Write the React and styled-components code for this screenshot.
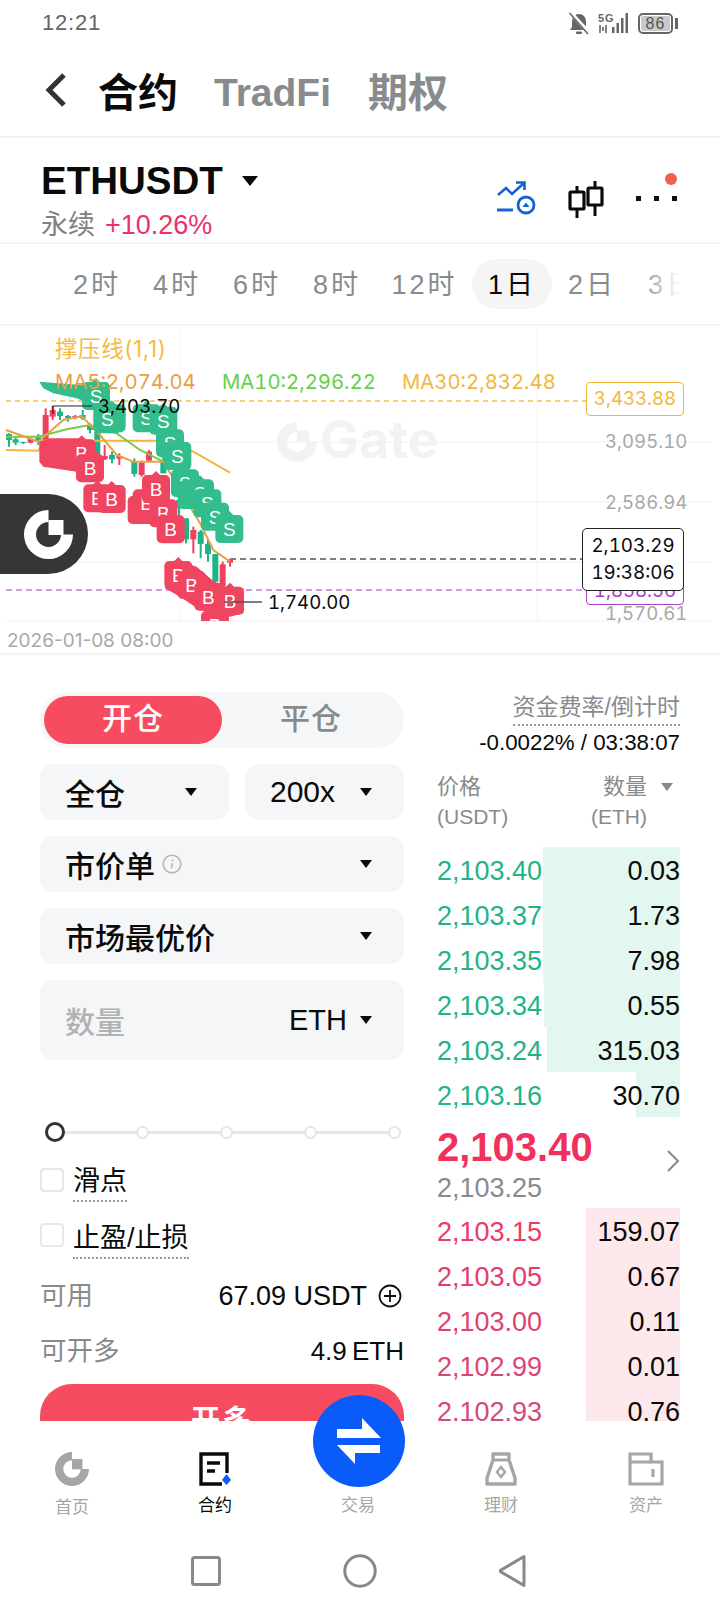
import styled, { createGlobalStyle } from "styled-components";

const red = "#f74b60";
const green = "#1fb488";
const FONT = `"Liberation Sans", "Noto Sans CJK SC", sans-serif`;
const CHART_FONT = `Inter, "Noto Sans CJK SC", sans-serif`;

const GlobalStyle = createGlobalStyle`
  html, body { margin: 0; padding: 0; background: #fff; }
  body { font-family: ${FONT}; color: #0a0a0a; }
  * { box-sizing: border-box; }
`;

const Page = styled.div`
  width: 720px;
  height: 1612px;
  overflow: hidden;
  display: flex;
  flex-direction: column;
  background: #fff;
`;

/* status bar */
const StatusBar = styled.div`
  height: 50px;
  padding: 0 47px 4px 42px;
  display: flex;
  align-items: center;
  justify-content: space-between;
  color: #666;
  font-size: 22px;
  letter-spacing: 0.8px;
`;
const StatusIcons = styled.div`
  display: flex;
  align-items: center;
  gap: 8px;
`;
const Battery = styled.div`
  width: 35px;
  height: 21px;
  border: 2px solid #666;
  border-radius: 5px;
  padding: 1px;
  display: flex;
  position: relative;
  &::after {
    content: "";
    position: absolute;
    right: -7px;
    top: 3px;
    width: 3px;
    height: 11px;
    background: #666;
  }
`;
const BatteryFill = styled.div`
  flex: 1;
  background: #c9c9c9;
  border-radius: 2px;
  font-size: 16px;
  line-height: 15px;
  letter-spacing: 1px;
  text-align: center;
  color: #555;
`;

/* header tabs */
const Header = styled.div`
  height: 88px;
  padding: 0 0 6px 44px;
  display: flex;
  align-items: center;
  border-bottom: 2px solid #f2f2f2;
`;
const HeaderTab = styled.div`
  font-size: ${(p) => p.$size || 40}px;
  font-weight: 700;
  color: ${(p) => (p.$active ? "#0a0a0a" : "#888b8d")};
  margin-left: ${(p) => p.$gap}px;
  padding-top: ${(p) => p.$drop || 0}px;
`;

/* symbol row */
const SymbolBar = styled.div`
  height: 106px;
  padding: 20px 42px 0 41px;
  display: flex;
  justify-content: space-between;
  border-bottom: 2px solid #f4f4f4;
`;
const SymbolName = styled.div`
  display: flex;
  align-items: center;
  gap: 19px;
  font-size: 38.5px;
  line-height: 46px;
  font-weight: 700;
`;
const Caret = styled.span`
  display: inline-block;
  width: 0;
  height: 0;
  border-left: ${(p) => p.$size || 6}px solid transparent;
  border-right: ${(p) => p.$size || 6}px solid transparent;
  border-top: ${(p) => (p.$size || 6) + 2}px solid ${(p) => p.$color || "#0a0a0a"};
`;
const SymbolSub = styled.div`
  display: flex;
  align-items: baseline;
  gap: 10px;
  margin-top: 3px;
  color: #808080;
  font-size: 27px;
  line-height: 36px;
`;
const Change = styled.span`
  color: #e8336a;
`;
const Tools = styled.div`
  display: flex;
  align-items: flex-start;
  gap: 32px;
  padding-top: 23px;
`;

/* interval tabs */
const Intervals = styled.div`
  height: 80px;
  padding-left: 57px;
  margin-right: 40px;
  display: flex;
  align-items: center;
  overflow: hidden;
  position: relative;
  &::after {
    content: "";
    position: absolute;
    right: 0;
    top: 0;
    width: 40px;
    height: 100%;
    background: linear-gradient(90deg, rgba(255, 255, 255, 0), #fff);
  }
`;
const Interval = styled.div`
  flex: none;
  width: ${(p) => p.$w || 80}px;
  height: 50px;
  line-height: 53px;
  text-align: center;
  font-size: 27px;
  letter-spacing: 3px;
  border-radius: 25px;
  color: ${(p) => (p.$active ? "#0a0a0a" : "#888b8d")};
  background: ${(p) => (p.$active ? "#f5f5f5" : "transparent")};
`;
const Rule = styled.div`
  height: 2px;
  background: #f4f4f4;
`;

/* chart */
const Chart = styled.div`
  position: relative;
  height: 329px;
  border-bottom: 2px solid #f4f4f4;
  font-family: ${CHART_FONT};
  font-variant-numeric: tabular-nums;
`;
const ChartSvg = styled.svg`
  position: absolute;
  inset: 0;
  display: block;
`;
const ChartLabel = styled.div`
  position: absolute;
  left: ${(p) => p.$x}px;
  top: ${(p) => p.$y}px;
  transform: translateY(-50%);
  font-size: ${(p) => p.$size || 18.6}px;
  font-variant-numeric: ${(p) => (p.$plain ? "normal" : "tabular-nums")};
  letter-spacing: ${(p) => p.$track || 0}px;
  color: ${(p) => p.$color || "#0a0a0a"};
  white-space: nowrap;
`;
const PriceTag = styled.div`
  position: absolute;
  left: 586px;
  top: ${(p) => p.$y}px;
  width: 98px;
  height: ${(p) => p.$h}px;
  border: 1.5px solid ${(p) => p.$color};
  border-radius: 4px;
  background: #fff;
  color: ${(p) => p.$color};
  font-size: 18.6px;
  line-height: ${(p) => p.$h - 3}px;
  text-align: center;
`;
const LiveTag = styled.div`
  position: absolute;
  left: 582px;
  top: 202px;
  width: 102px;
  height: 63px;
  border: 1.5px solid #222;
  border-radius: 5px;
  background: #fff;
  color: #0a0a0a;
  font-size: 18.8px;
  line-height: 27px;
  padding-top: 3px;
  text-align: center;
`;
const Floating = styled.div`
  position: absolute;
  left: 0;
  top: 168px;
  width: 88px;
  height: 80px;
  background: #363636;
  border-radius: 0 40px 40px 0;
  display: flex;
  align-items: center;
  padding-left: 24px;
`;

/* trade area */
const Trade = styled.div`
  height: 766px;
  overflow: hidden;
  padding: 37px 40px 0;
  display: grid;
  grid-template-columns: 364px 243px;
  column-gap: 33px;
  align-items: start;
`;
const Form = styled.div`
  display: flex;
  flex-direction: column;
  gap: 16px;
`;
const Toggle = styled.div`
  height: 56px;
  padding: 4px;
  border-radius: 28px;
  background: #f5f6f7;
  display: flex;
`;
const ToggleItem = styled.div`
  width: 178px;
  border-radius: 24px;
  text-align: center;
  font-size: 30px;
  font-weight: 500;
  line-height: 46px;
  letter-spacing: 1px;
  color: ${(p) => (p.$active ? "#fff" : "#888b8d")};
  background: ${(p) => (p.$active ? red : "transparent")};
`;
const SelectRow = styled.div`
  display: flex;
  gap: 16px;
`;
const Select = styled.div`
  flex: none;
  width: ${(p) => (p.$w ? `${p.$w}px` : "100%")};
  height: ${(p) => p.$h || 56}px;
  padding: 0 32px 0 25px;
  border-radius: 14px;
  background: #f5f6f7;
  display: flex;
  align-items: center;
  justify-content: space-between;
  font-size: 30px;
  font-weight: 500;
`;
const SelectText = styled.div`
  display: flex;
  align-items: center;
  gap: 7px;
  color: ${(p) => p.$color || "#0a0a0a"};
`;
const Unit = styled.div`
  display: flex;
  align-items: center;
  gap: 13px;
  font-size: 29px;
`;

const Slider = styled.div`
  margin: 46px 3px 0 5px;
  height: 20px;
  display: flex;
  align-items: center;
  justify-content: space-between;
  position: relative;
  &::before {
    content: "";
    position: absolute;
    left: 0;
    right: 0;
    top: 9px;
    height: 2.5px;
    background: #e4e6e7;
  }
`;
const Knob = styled.div`
  position: relative;
  width: ${(p) => (p.$on ? 20 : 13)}px;
  height: ${(p) => (p.$on ? 20 : 13)}px;
  border-radius: 50%;
  background: #fff;
  border: ${(p) => (p.$on ? "3.5px solid #333" : "2px solid #e4e6e7")};
`;
const CheckRow = styled.div`
  display: flex;
  align-items: flex-start;
  gap: 9px;
  margin-top: ${(p) => p.$mt}px;
`;
const Box = styled.div`
  width: 24px;
  height: 24px;
  margin-top: ${(p) => p.$mt}px;
  border: 2px solid #e6e8e9;
  border-radius: 4px;
`;
const Dotted = styled.div`
  font-size: ${(p) => p.$size || 27}px;
  line-height: ${(p) => p.$lh || 34}px;
  color: ${(p) => p.$color || "#0a0a0a"};
  padding-bottom: 2px;
  border-bottom: 2px dotted #9a9a9a;
`;
const InfoRow = styled.div`
  display: flex;
  align-items: center;
  justify-content: space-between;
  height: 36px;
  margin-top: ${(p) => p.$mt}px;
  font-size: 27px;
  color: #0a0a0a;
`;
const InfoLabel = styled.div`
  color: #888b8d;
  font-size: 26.5px;
  padding-bottom: 6px;
`;
const InfoValue = styled.div`
  display: flex;
  align-items: center;
  gap: 11px;
  padding-right: 2px;
`;
const MaxValue = styled.div`
  font-size: 26px;
  word-spacing: -2px;
`;
const OpenButton = styled.div`
  margin-top: -1px;
  height: 74px;
  flex: none;
  border-radius: 32px;
  background: ${red};
  color: #fff;
  font-size: 29px;
  font-weight: 700;
  line-height: 74px;
  text-align: center;
  letter-spacing: 2px;
`;

/* order book */
const Book = styled.div`
  display: flex;
  flex-direction: column;
`;
const Funding = styled.div`
  display: flex;
  flex-direction: column;
  align-items: flex-end;
`;
const FundingValue = styled.div`
  font-size: 22.3px;
  line-height: 30px;
  margin-top: 2px;
`;
const BookHead = styled.div`
  display: flex;
  justify-content: space-between;
  margin-top: 13px;
  color: #888b8d;
`;
const HeadCell = styled.div`
  display: flex;
  flex-direction: column;
  align-items: ${(p) => (p.$right ? "flex-end" : "flex-start")};
  padding-right: ${(p) => (p.$right ? 33 : 0)}px;
  font-size: 22px;
  line-height: 32px;
  position: relative;
`;
const HeadUnit = styled.div`
  font-size: 21px;
  line-height: 28px;
`;
const HeadCaret = styled.div`
  position: absolute;
  right: 7px;
  top: -3px;
`;
const Levels = styled.div`
  margin-top: ${(p) => p.$mt}px;
`;
const Level = styled.div`
  position: relative;
  height: 45px;
  padding-top: 3px;
  display: flex;
  align-items: center;
  justify-content: space-between;
  font-size: 27px;
  color: #0a0a0a;
`;
const DepthBar = styled.div`
  position: absolute;
  right: 0;
  top: 0;
  bottom: 0;
  background: ${(p) => p.$bg};
`;
const LevelText = styled.span`
  position: relative;
  color: ${(p) => p.$color || "inherit"};
`;
const Mid = styled.div`
  height: 91px;
  position: relative;
  padding-top: 7px;
`;
const MidPrice = styled.div`
  font-size: 40px;
  font-weight: 700;
  line-height: 46px;
  color: #f2305c;
`;
const MidMark = styled.div`
  font-size: 27px;
  line-height: 32px;
  margin-top: 2px;
  color: #888b8d;
`;
const MidArrow = styled.svg`
  position: absolute;
  right: 0;
  top: 32px;
`;

/* bottom nav */
const BottomNav = styled.div`
  position: relative;
  height: 108px;
  display: grid;
  grid-template-columns: 144px 142px 144px 142px 148px;
  padding-top: 30px;
  background: #fff;
`;
const NavItem = styled.div`
  display: flex;
  flex-direction: column;
  align-items: center;
  gap: ${(p) => p.$gap || 7}px;
  font-size: 17px;
  line-height: 24px;
  color: ${(p) => (p.$active ? "#0a0a0a" : "#a6a6a6")};
`;
const NavIcon = styled.div`
  height: 36px;
  display: flex;
  align-items: center;
`;
const Fab = styled.div`
  position: absolute;
  left: 313px;
  top: -26px;
  width: 92px;
  height: 92px;
  border-radius: 50%;
  background: #0a5cfa;
  display: flex;
  align-items: center;
  justify-content: center;
`;
const SystemBar = styled.div`
  flex: 1;
  display: flex;
  align-items: center;
  justify-content: center;
  gap: 122px;
`;

const GateMark = ({ size, color }) => (
  <svg width={size} height={size} viewBox="0 0 49 49">
    <path
      d="M24.5 0A24.5 24.5 0 1 0 49 24.5H37A12.5 12.5 0 1 1 24.5 12Z"
      fill={color}
    />
    <rect x="24.5" y="10" width="15" height="15" fill={color} />
  </svg>
);

// candle data and markers are in 3x crop units, converted by toPx / toY
const candles = [
  [27, 310, 350, 312, 330, 0], [47, 320, 345, 328, 338, 0], [70, 335, 342, 336, 339, 0],
  [92, 325, 340, 326, 338, 1], [115, 312, 345, 322, 335, 0], [137, 235, 330, 255, 330, 1],
  [158, 228, 270, 240, 260, 1], [180, 235, 270, 245, 258, 0], [204, 255, 275, 258, 265, 0],
  [226, 255, 268, 258, 264, 1], [248, 240, 270, 255, 265, 0], [270, 280, 310, 285, 300, 0],
  [292, 300, 375, 305, 372, 0], [314, 345, 390, 378, 388, 1], [336, 365, 400, 375, 388, 0],
  [358, 370, 405, 378, 386, 1], [403, 385, 440, 395, 432, 0], [425, 392, 440, 398, 435, 1],
  [447, 360, 395, 365, 392, 1], [490, 380, 430, 395, 430, 0], [537, 505, 560, 510, 535, 0],
  [558, 565, 640, 565, 628, 0], [580, 590, 670, 600, 628, 1], [602, 600, 685, 605, 642, 0],
  [624, 630, 695, 642, 672, 0], [646, 672, 760, 672, 755, 0], [668, 695, 770, 703, 770, 1],
  [690, 688, 710, 688, 698, 1],
];

const sellBlob = [[118, 155], [330, 172], [330, 232], [290, 228], [230, 205], [160, 190], [130, 175]];
const buyBlobs = [
  [[118, 335], [150, 325], [250, 325], [300, 375], [300, 420], [230, 425], [130, 410], [118, 395]],
  [[495, 705], [530, 690], [590, 710], [660, 770], [730, 775], [730, 850], [690, 860], [600, 840], [540, 800], [495, 775]],
];

const sells = [
  [288, 198], [335, 265], [322, 268], [440, 265], [490, 272], [510, 340], [532, 378],
  [555, 460], [575, 495], [600, 490], [622, 520], [645, 560], [688, 597],
];
const buys = [
  [245, 370], [270, 415], [292, 505], [335, 507], [425, 540], [440, 520], [468, 477],
  [490, 550], [512, 598], [535, 735], [575, 765], [625, 800], [690, 812], [645, 885],
];

const toPx = (v) => v / 3;
const toY = (v) => v / 3 + 330 - 326;
const blobPoints = (pts) => pts.map(([x, y]) => `${toPx(x)},${toY(y)}`).join(" ");

const Marker = ({ cx, cy, fill, label }) => {
  const x = toPx(cx);
  const y = toY(cy);
  const s = 28;
  return (
    <g>
      <rect x={x - s / 2} y={y - s / 2} width={s} height={s} rx="5" fill={fill} />
      <path
        d={`M${x - 5} ${y - s / 2 + 1}L${x} ${y - s / 2 - 4}L${x + 5} ${y - s / 2 + 1}Z`}
        fill={fill}
      />
      <text x={x} y={y + 7} textAnchor="middle" fontSize="19" fontFamily="Liberation Sans, sans-serif" fill="#fff">
        {label}
      </text>
    </g>
  );
};

const PriceChart = () => (
  <Chart>
    <ChartSvg width="720" height="329" viewBox="0 0 720 329">
      <defs>
        <clipPath id="plot">
          <rect x="0" y="0" width="720" height="295" />
        </clipPath>
      </defs>
      {[116, 176, 236, 295].map((y) => (
        <line key={y} x1="6" x2="712" y1={y} y2={y} stroke="#f6f6f6" strokeWidth="1.5" />
      ))}
      <line x1="180" x2="180" y1="0" y2="295" stroke="#f9f9f9" strokeWidth="1.5" />
      <line x1="537" x2="537" y1="0" y2="295" stroke="#f8f8f8" strokeWidth="1.5" />

      <g fill="#f1f3f3">
        <path d="M297 96A20 20 0 1 0 317 116H307A10 10 0 1 1 297 106Z" />
        <rect x="297" y="104" width="12" height="12" />
        <text x="320" y="132" fontSize="52" fontWeight="700" fontFamily="Inter, sans-serif">Gate</text>
      </g>

      <line x1="6" x2="586" y1="75" y2="75" stroke="#f2c14e" strokeWidth="1.5" strokeDasharray="5 4" />
      <line x1="230" x2="582" y1="233" y2="233" stroke="#555" strokeWidth="1.5" strokeDasharray="6 4" />
      <line x1="6" x2="586" y1="264" y2="264" stroke="#c77ddb" strokeWidth="1.5" strokeDasharray="6 4" />

      {candles.map(([x, hi, lo, top, bot, up]) => (
        <g key={x} fill={up ? "#f0405f" : "#1fb488"}>
          <rect x={toPx(x) - 1} y={toY(hi)} width="2" height={toPx(lo - hi)} />
          <rect x={toPx(x) - 3} y={toY(top)} width="6" height={toPx(bot - top)} />
        </g>
      ))}

      <polyline
        fill="none"
        stroke="#f4b43f"
        strokeWidth="2"
        points={blobPoints([[18, 360], [115, 362], [130, 332], [470, 332], [580, 365], [690, 428]])}
      />
      <polyline
        fill="none"
        stroke="#7ac943"
        strokeWidth="2"
        points={blobPoints([[18, 320], [115, 320], [200, 298], [270, 285], [350, 310], [420, 360], [490, 395]])}
      />
      <polyline
        fill="none"
        stroke="#e8a045"
        strokeWidth="2"
        points={blobPoints([[18, 300], [60, 315], [115, 335], [190, 270], [245, 258], [300, 315], [350, 375], [400, 395], [490, 395], [600, 580], [640, 660], [690, 695]])}
      />

      <g clipPath="url(#plot)">
        <polygon points={blobPoints(sellBlob)} fill="#33bd8d" />
        {sells.map(([x, y]) => (
          <Marker key={`s${x}${y}`} cx={x} cy={y} fill="#33bd8d" label="S" />
        ))}
        {buyBlobs.map((pts, i) => (
          <polygon key={i} points={blobPoints(pts)} fill="#ef4560" />
        ))}
        {buys.map(([x, y]) => (
          <Marker key={`b${x}${y}`} cx={x} cy={y} fill="#ef4560" label="B" />
        ))}
      </g>

      <path d="M53 88V80H92" stroke="#222" strokeWidth="1.2" fill="none" />
      <path d="M224 276H262" stroke="#555" strokeWidth="1.5" fill="none" />
    </ChartSvg>

    <ChartLabel $x={55} $y={21} $size={22.5} $track={0.6} $plain $color="#f5bb45">撑压线(1,1)</ChartLabel>
    <ChartLabel $x={55} $y={55} $size={20.3} $color="#e8a045">MA5:2,074.04</ChartLabel>
    <ChartLabel $x={222} $y={55} $size={20.3} $color="#66cf4a">MA10:2,296.22</ChartLabel>
    <ChartLabel $x={402} $y={55} $size={20.3} $color="#f2b73c">MA30:2,832.48</ChartLabel>
    <ChartLabel $x={98} $y={80}>3,403.70</ChartLabel>
    <ChartLabel $x={268} $y={276}>1,740.00</ChartLabel>
    <ChartLabel $x={605} $y={115} $color="#a8a8a8">3,095.10</ChartLabel>
    <ChartLabel $x={605} $y={176} $color="#a8a8a8">2,586.94</ChartLabel>
    <ChartLabel $x={605} $y={287} $color="#a8a8a8">1,570.61</ChartLabel>
    <ChartLabel $x={7} $y={314} $size={19} $plain $color="#a8a8a8">2026-01-08 08:00</ChartLabel>

    <PriceTag $y={56} $h={34} $color="#f2b73c">3,433.88</PriceTag>
    <PriceTag $y={250} $h={29} $color="#a742c8">1,858.56</PriceTag>
    <LiveTag>
      2,103.29
      <br />
      19:38:06
    </LiveTag>

    <Floating>
      <GateMark size={49} color="#fff" />
    </Floating>
  </Chart>
);

const asks = [
  ["2,103.40", "0.03", 137],
  ["2,103.37", "1.73", 137],
  ["2,103.35", "7.98", 137],
  ["2,103.34", "0.55", 136],
  ["2,103.24", "315.03", 133],
  ["2,103.16", "30.70", 44],
];
const bids = [
  ["2,103.15", "159.07", 94, "#ee3a66"],
  ["2,103.05", "0.67", 94, "#e53d6b"],
  ["2,103.00", "0.11", 94, "#e0436f"],
  ["2,102.99", "0.01", 94, "#db4673"],
  ["2,102.93", "0.76", 94, "#d54a78"],
];

const OrderBook = () => (
  <Book>
    <Funding>
      <Dotted $size={23} $lh={30} $color="#888b8d">资金费率/倒计时</Dotted>
      <FundingValue>-0.0022% / 03:38:07</FundingValue>
    </Funding>
    <BookHead>
      <HeadCell>
        价格
        <HeadUnit>(USDT)</HeadUnit>
      </HeadCell>
      <HeadCell $right>
        数量
        <HeadUnit>(ETH)</HeadUnit>
        <HeadCaret>
          <Caret $color="#888b8d" />
        </HeadCaret>
      </HeadCell>
    </BookHead>
    <Levels $mt={16}>
      {asks.map(([price, size, depth]) => (
        <Level key={price}>
          <DepthBar $bg="#e3f7f1" style={{ width: depth }} />
          <LevelText $color={green}>{price}</LevelText>
          <LevelText>{size}</LevelText>
        </Level>
      ))}
    </Levels>
    <Mid>
      <MidPrice>2,103.40</MidPrice>
      <MidMark>2,103.25</MidMark>
      <MidArrow width="14" height="24" viewBox="0 0 14 24">
        <path d="M2 2L12 12L2 22" fill="none" stroke="#888" strokeWidth="2" />
      </MidArrow>
    </Mid>
    <Levels $mt={0}>
      {bids.map(([price, size, depth, color]) => (
        <Level key={price}>
          <DepthBar $bg="#fde8ec" style={{ width: depth }} />
          <LevelText $color={color}>{price}</LevelText>
          <LevelText>{size}</LevelText>
        </Level>
      ))}
    </Levels>
  </Book>
);

const OrderForm = () => (
  <Form>
    <Toggle>
      <ToggleItem $active>开仓</ToggleItem>
      <ToggleItem>平仓</ToggleItem>
    </Toggle>
    <SelectRow>
      <Select $w={189}>
        <SelectText>全仓</SelectText>
        <Caret />
      </Select>
      <Select $w={159}>
        <SelectText>200x</SelectText>
        <Caret />
      </Select>
    </SelectRow>
    <Select>
      <SelectText>
        市价单
        <svg width="20" height="20" viewBox="0 0 20 20">
          <circle cx="10" cy="10" r="8.8" fill="none" stroke="#b5b5b5" strokeWidth="1.6" />
          <path d="M10.6 5.6v1.6M10.4 9L9.4 14.4" stroke="#b5b5b5" strokeWidth="1.6" fill="none" />
        </svg>
      </SelectText>
      <Caret />
    </Select>
    <Select>
      <SelectText>市场最优价</SelectText>
      <Caret />
    </Select>
    <Select $h={80}>
      <SelectText $color="#b0b2b4">数量</SelectText>
      <Unit>
        ETH
        <Caret />
      </Unit>
    </Select>
    <Slider>
      <Knob $on />
      <Knob />
      <Knob />
      <Knob />
      <Knob />
    </Slider>
    <CheckRow $mt={6}>
      <Box $mt={4} />
      <Dotted>滑点</Dotted>
    </CheckRow>
    <CheckRow $mt={3}>
      <Box $mt={2} />
      <Dotted>止盈/止损</Dotted>
    </CheckRow>
    <InfoRow $mt={3}>
      <InfoLabel>可用</InfoLabel>
      <InfoValue>
        67.09 USDT
        <svg width="24" height="24" viewBox="0 0 24 24">
          <circle cx="12" cy="12" r="10.5" fill="none" stroke="#111" strokeWidth="1.8" />
          <path d="M6 12H18M12 6V18" stroke="#111" strokeWidth="1.8" />
        </svg>
      </InfoValue>
    </InfoRow>
    <InfoRow $mt={3}>
      <InfoLabel>可开多</InfoLabel>
      <MaxValue>4.9 ETH</MaxValue>
    </InfoRow>
    <OpenButton>开多</OpenButton>
  </Form>
);

const App = () => (
  <Page>
    <GlobalStyle />
    <StatusBar>
      12:21
      <StatusIcons>
        <svg width="22" height="24" viewBox="0 0 22 24">
          <path d="M11 3a7 7 0 0 0-7 7v6l-2 3h18l-2-3v-6a7 7 0 0 0-7-7z" fill="#666" />
          <rect x="8" y="20.5" width="6" height="2.5" rx="1" fill="#666" />
          <path d="M2 1L21 22" stroke="#fff" strokeWidth="4" />
          <path d="M1.5 2L20 23" stroke="#666" strokeWidth="1.6" />
        </svg>
        <svg width="32" height="22" viewBox="0 0 32 22">
          <text x="0" y="9.5" fontSize="11" fontWeight="700" fontFamily="Liberation Sans, sans-serif" fill="#666">5G</text>
          <path d="M2 13v8M5 15v4M8 13v8" stroke="#666" strokeWidth="1.6" />
          <rect x="14" y="15" width="2.5" height="6" fill="#666" />
          <rect x="18.5" y="11" width="2.5" height="10" fill="#666" />
          <rect x="23" y="6" width="2.5" height="15" fill="#666" />
          <rect x="27.5" y="1" width="2.5" height="20" fill="#666" />
        </svg>
        <Battery>
          <BatteryFill>86</BatteryFill>
        </Battery>
      </StatusIcons>
    </StatusBar>

    <Header>
      <svg width="24" height="36" viewBox="0 0 24 36">
        <path d="M20 3L5 18L20 33" fill="none" stroke="#333" strokeWidth="5" />
      </svg>
      <HeaderTab $active $gap={30}>合约</HeaderTab>
      <HeaderTab $gap={36} $size={39} $drop={5}>TradFi</HeaderTab>
      <HeaderTab $gap={37}>期权</HeaderTab>
    </Header>

    <SymbolBar>
      <div>
        <SymbolName>
          ETHUSDT
          <Caret $size={8} />
        </SymbolName>
        <SymbolSub>
          永续
          <Change>+10.26%</Change>
        </SymbolSub>
      </div>
      <Tools>
        <svg width="39" height="34" viewBox="0 0 39 34">
          <path d="M1 14L9 7L15 13L27 2M19 1.5H27.5V9" fill="none" stroke="#1660d8" strokeWidth="2.6" />
          <path d="M0 29H16" stroke="#1660d8" strokeWidth="3" />
          <circle cx="29" cy="24" r="8" fill="none" stroke="#1660d8" strokeWidth="2.8" />
          <path d="M25.5 26L29 21.5L32.5 26Z" fill="#1660d8" />
        </svg>
        <svg width="36" height="38" viewBox="0 0 36 38">
          <path d="M9 5V12M9 28V37M27 0V7M27 24V35" stroke="#0a0a0a" strokeWidth="3" />
          <rect x="2" y="11" width="14" height="17" rx="1" fill="none" stroke="#0a0a0a" strokeWidth="3.2" />
          <rect x="20" y="7" width="14" height="17" rx="1" fill="none" stroke="#0a0a0a" strokeWidth="3.2" />
        </svg>
        <svg width="42" height="44" viewBox="0 0 42 44" style={{ marginTop: -9 }}>
          <circle cx="35" cy="7" r="6" fill="#f4604f" />
          <rect x="0" y="24" width="5" height="5" fill="#111" />
          <rect x="18" y="24" width="5" height="5" fill="#111" />
          <rect x="36" y="24" width="5" height="5" fill="#111" />
        </svg>
      </Tools>
    </SymbolBar>

    <Intervals>
      <Interval>2时</Interval>
      <Interval>4时</Interval>
      <Interval>6时</Interval>
      <Interval>8时</Interval>
      <Interval $w={95}>12时</Interval>
      <Interval $active>1日</Interval>
      <Interval>2日</Interval>
      <Interval>3日</Interval>
    </Intervals>
    <Rule />

    <PriceChart />

    <Trade>
      <OrderForm />
      <OrderBook />
    </Trade>

    <BottomNav>
      <NavItem $gap={9}>
        <NavIcon>
          <GateMark size={34} color="#a6a6a6" />
        </NavIcon>
        首页
      </NavItem>
      <NavItem $active>
        <NavIcon>
          <svg width="34" height="34" viewBox="0 0 34 34">
            <path d="M29 21V2H3V32H24" fill="none" stroke="#0a0a0a" strokeWidth="3.4" />
            <path d="M9 11H22M9 19H17" stroke="#0a0a0a" strokeWidth="3.4" />
            <path d="M28.5 22L33 28L28.5 33L24 28Z" fill="#0a5cfa" />
          </svg>
        </NavIcon>
        合约
      </NavItem>
      <NavItem>
        <NavIcon />
        交易
      </NavItem>
      <NavItem>
        <NavIcon>
          <svg width="34" height="34" viewBox="0 0 34 34">
            <path d="M9 2H25V8L31 26V32H3V26L9 8Z" fill="none" stroke="#a6a6a6" strokeWidth="3.4" strokeLinejoin="round" />
            <path d="M8 8H26" stroke="#a6a6a6" strokeWidth="3" />
            <path d="M17 15L21 20L17 25L13 20Z" fill="none" stroke="#a6a6a6" strokeWidth="2.4" />
          </svg>
        </NavIcon>
        理财
      </NavItem>
      <NavItem>
        <NavIcon>
          <svg width="36" height="34" viewBox="0 0 36 34">
            <path d="M2 32V2H23V10H34V32Z" fill="none" stroke="#a6a6a6" strokeWidth="3.2" />
            <path d="M2 10H23M25 17V25" stroke="#a6a6a6" strokeWidth="3.2" />
          </svg>
        </NavIcon>
        资产
      </NavItem>
      <Fab>
        <svg width="44" height="46" viewBox="0 0 44 46">
          <path d="M0 11H25V0L44 20H0ZM0 27H43V35H18V46Z" fill="#fff" />
        </svg>
      </Fab>
    </BottomNav>

    <SystemBar>
      <svg width="30" height="30" viewBox="0 0 30 30">
        <rect x="1.5" y="1.5" width="27" height="27" rx="2" fill="none" stroke="#888" strokeWidth="3" />
      </svg>
      <svg width="34" height="34" viewBox="0 0 34 34">
        <circle cx="17" cy="17" r="15.2" fill="none" stroke="#888" strokeWidth="3" />
      </svg>
      <svg width="30" height="34" viewBox="2 0 30 34">
        <path d="M27 2.5V31.5L2.5 17Z" fill="none" stroke="#888" strokeWidth="3" strokeLinejoin="round" />
      </svg>
    </SystemBar>
  </Page>
);

export default App;
